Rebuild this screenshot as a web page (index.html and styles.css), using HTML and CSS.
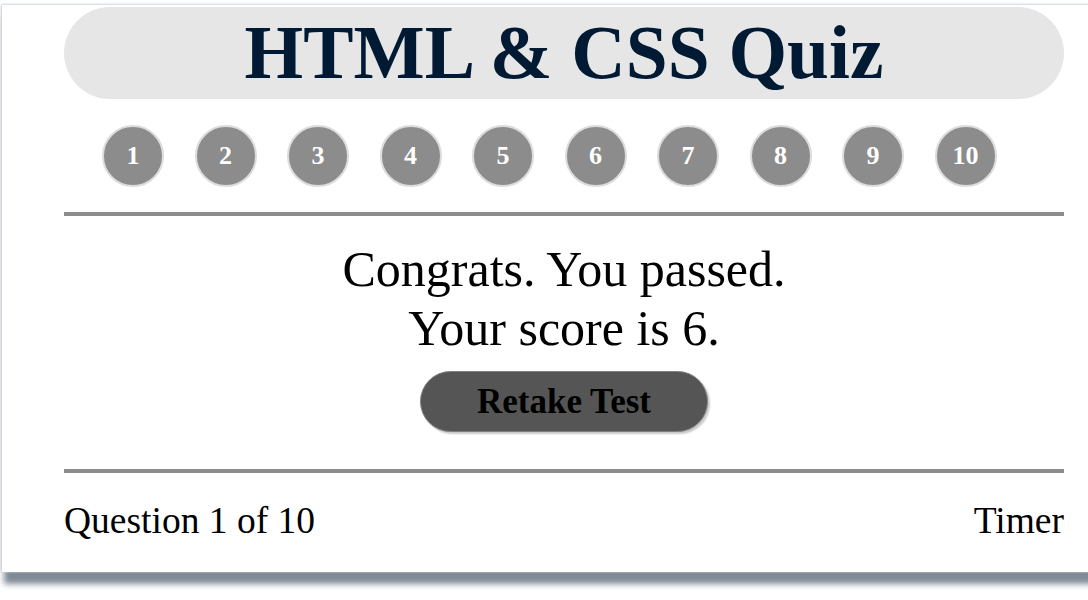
FILE: index.html
```html
<!DOCTYPE html>
<html lang="en">
<head>
<meta charset="utf-8">
<title>HTML &amp; CSS Quiz</title>
<link rel="stylesheet" href="styles.css">
</head>
<body>
<main class="quiz">
  <h1 class="quiz-title">HTML &amp; CSS Quiz</h1>
  <ol class="steps">
    <li class="step">1</li>
    <li class="step">2</li>
    <li class="step">3</li>
    <li class="step">4</li>
    <li class="step">5</li>
    <li class="step">6</li>
    <li class="step">7</li>
    <li class="step">8</li>
    <li class="step">9</li>
    <li class="step">10</li>
  </ol>
  <div class="rule"></div>
  <section class="result">
    <p class="result-line">Congrats. You passed.</p>
    <p class="result-line">Your score is 6.</p>
    <button class="retake" type="button">Retake Test</button>
  </section>
  <div class="rule rule-bottom"></div>
  <footer class="quiz-footer">
    <span class="progress">Question 1 of 10</span>
    <span class="timer">Timer</span>
  </footer>
</main>
</body>
</html>
```

FILE: styles.css
```css
html, body {
  margin: 0;
  padding: 0;
  overflow: hidden;
  background: #ffffff;
}

body {
  font-family: "Liberation Serif", "Times New Roman", serif;
  color: #000000;
  width: 1088px;
  height: 600px;
}

.quiz {
  box-sizing: content-box;
  width: 1000px;
  margin: 5px 0 0 2px;
  padding: 2px 60px 30px 62px;
  background: #ffffff;
  box-shadow: 0 -1px 2px #d6dadf, -1px 0 2px #c9ced4, 2px 12px 6px #7f8b97;
}

.quiz-title {
  margin: 0;
  height: 92px;
  line-height: 92px;
  border-radius: 46px;
  background: #e6e6e6;
  text-align: center;
  font-size: 75.4px;
  font-weight: bold;
  color: #001a33;
}

.steps {
  list-style: none;
  display: flex;
  gap: 30.5px;
  margin: 26px 0 0;
  padding: 0 0 0 38px;
}

.step {
  box-sizing: border-box;
  width: 62px;
  height: 62px;
  border-radius: 50%;
  border: 2px solid #dcdcdc;
  background: #8c8c8c;
  color: #ffffff;
  font-size: 26px;
  font-weight: bold;
  display: flex;
  align-items: center;
  justify-content: center;
}

.rule {
  height: 4px;
  background: #8c8c8c;
  margin-top: 25px;
}

.rule-bottom {
  margin-top: 37px;
}

.result {
  margin-top: 24px;
  display: flex;
  flex-direction: column;
  align-items: center;
}

.result-line {
  margin: 0;
  font-size: 50px;
  line-height: 59px;
}

.retake {
  margin-top: 13px;
  box-sizing: border-box;
  width: 288px;
  height: 61px;
  border-radius: 31px;
  border: 1px solid #808080;
  background: #555555;
  box-shadow: 2px 2px 2px #c8c8c8;
  font-family: "Liberation Serif", "Times New Roman", serif;
  font-size: 35px;
  font-weight: bold;
  color: #000000;
  padding: 0;
}

.quiz-footer {
  display: flex;
  justify-content: space-between;
  margin-top: 26px;
  font-size: 37.5px;
  line-height: 43px;
}
```
